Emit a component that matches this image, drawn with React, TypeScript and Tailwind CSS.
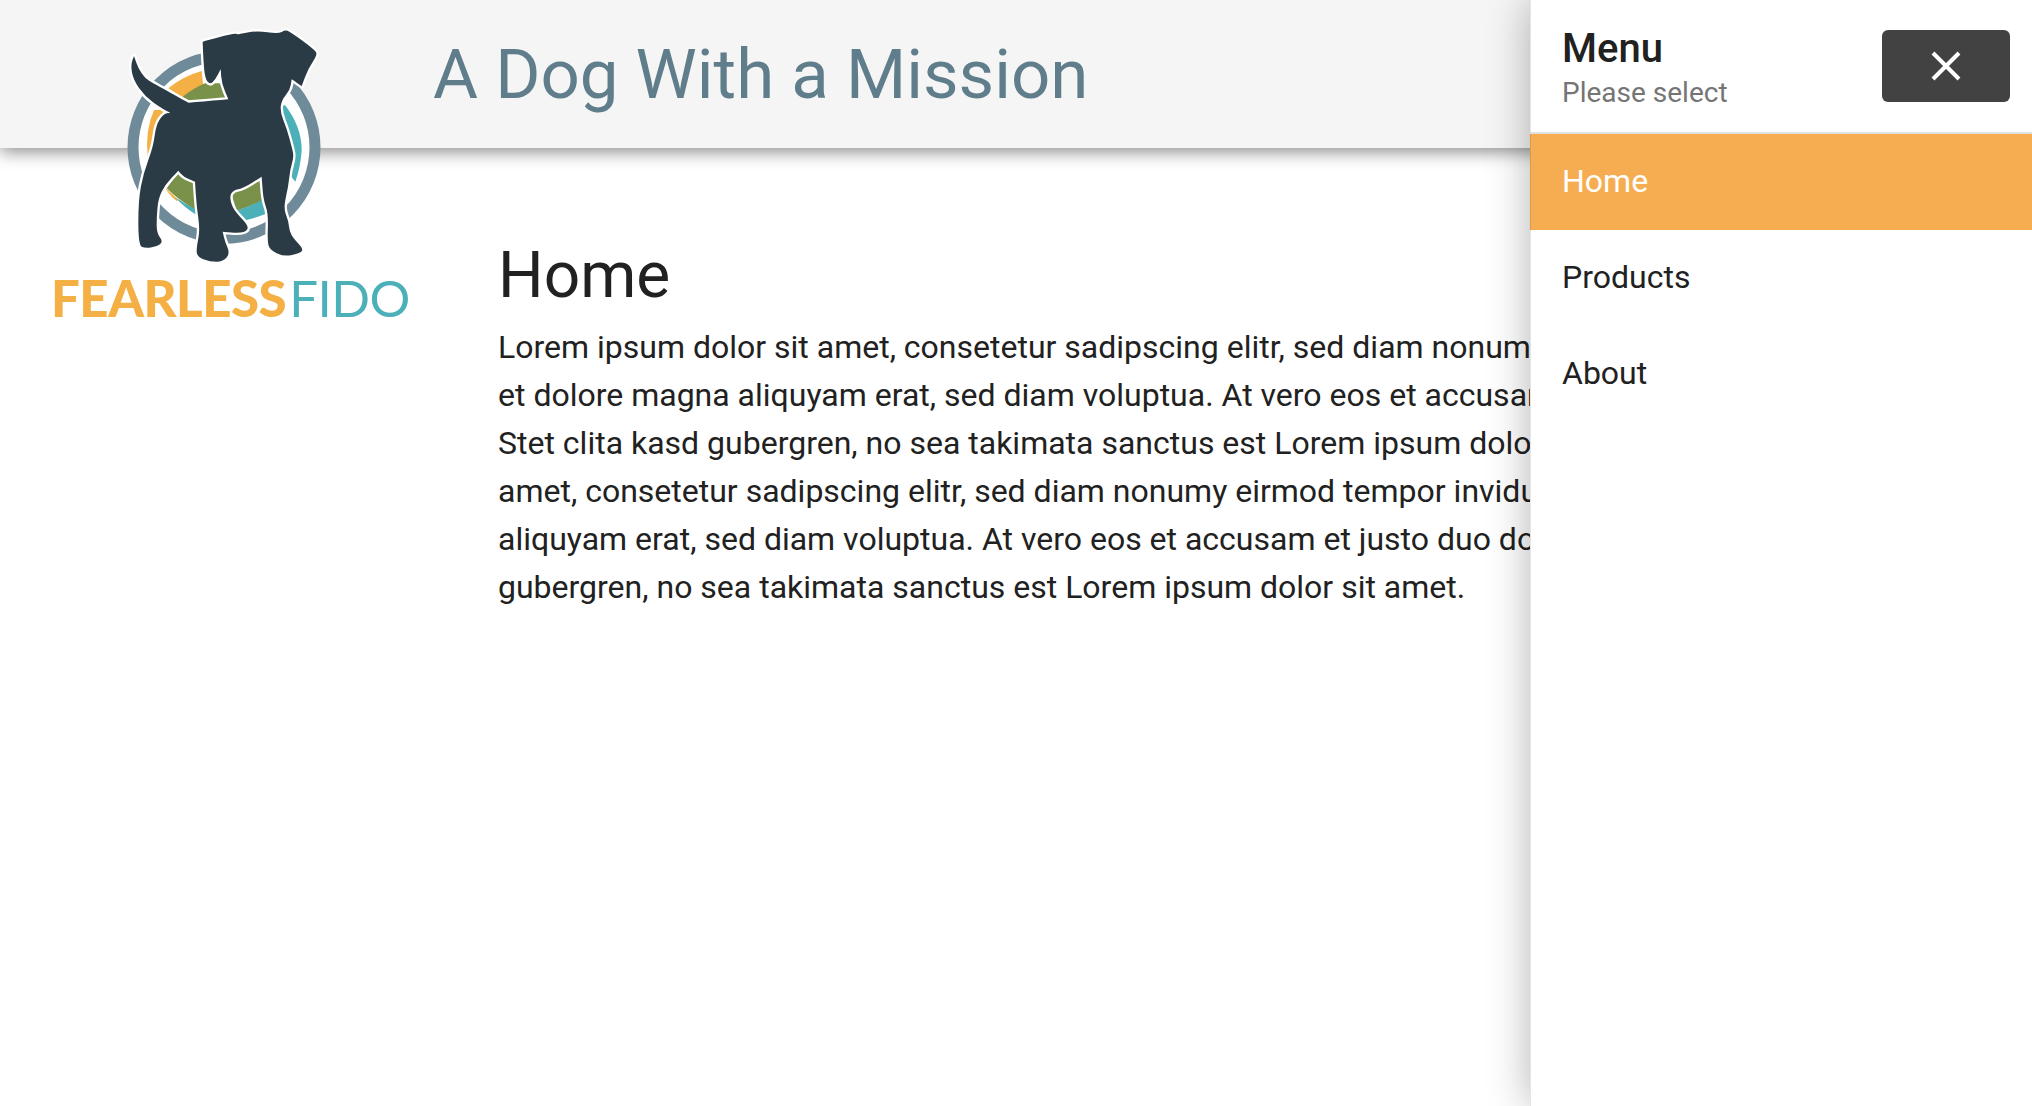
const LOREM = "Lorem ipsum dolor sit amet, consetetur sadipscing elitr, sed diam nonumy eirmod tempor invidunt ut labore et dolore magna aliquyam erat, sed diam voluptua. At vero eos et accusam et justo duo dolores et ea rebum. Stet clita kasd gubergren, no sea takimata sanctus est Lorem ipsum dolor sit amet. Lorem ipsum dolor sit amet, consetetur sadipscing elitr, sed diam nonumy eirmod tempor invidunt ut labore et dolore magna aliquyam erat, sed diam voluptua. At vero eos et accusam et justo duo dolores et ea rebum. Stet clita kasd gubergren, no sea takimata sanctus est Lorem ipsum dolor sit amet.";

type Pt = [number, number];

// outline of the dog, traced from the logo; a doubled point keeps a sharp corner
const DOG: Pt[] = [
  [312, 168], [312, 168], [325, 205], [345, 235], [370, 250], [475, 308], [475, 308], [595, 298], [595, 298],
  [575, 250], [572, 208], [572, 208], [555, 240], [540, 254], [525, 235], [520, 180], [518, 125], [518, 125],
  [610, 100], [625, 103], [625, 103], [680, 92], [745, 102], [765, 90], [780, 95], [855, 150], [862, 165],
  [835, 205], [815, 258], [815, 258], [785, 238], [785, 238], [780, 270], [755, 300], [750, 335], [770, 385],
  [785, 440], [792, 470], [780, 510], [775, 560], [760, 625], [775, 660], [780, 705], [820, 745], [812, 760],
  [760, 770], [720, 750], [712, 725], [715, 640], [700, 600], [695, 530], [695, 530], [640, 565], [610, 570],
  [598, 590], [610, 630], [650, 670], [655, 690], [630, 700], [578, 695], [578, 695], [585, 725], [600, 760],
  [580, 785], [540, 785], [500, 770], [500, 740], [510, 690], [500, 620], [495, 545], [495, 545], [460, 530],
  [445, 512], [445, 512], [405, 555], [385, 595], [380, 650], [380, 700], [400, 725], [380, 740], [345, 745],
  [325, 735], [325, 600], [340, 520], [370, 440], [378, 375], [400, 342], [420, 338], [420, 338], [395, 325],
  [345, 290], [310, 240], [302, 195],
];

const smooth = (pts: Pt[]) => {
  const mid = (a: Pt, b: Pt): Pt => [(a[0] + b[0]) / 2, (a[1] + b[1]) / 2];
  const start = mid(pts[pts.length - 1], pts[0]);
  let d = `M${start[0]} ${start[1]}`;
  pts.forEach((p, i) => {
    const m = mid(p, pts[(i + 1) % pts.length]);
    d += `Q${p[0]} ${p[1]} ${m[0]} ${m[1]}`;
  });
  return d + "Z";
};

const Logo = () => (
  <div className="absolute top-0 left-[30px] h-[340px] w-[400px]">
    <svg width="400" height="340" viewBox="0 0 1200 1020">
      <circle cx="582" cy="442" r="273" fill="white" stroke="#6f8b9a" strokeWidth="33" />
      <path fill="#f4b044" d="M415 265Q460 228 515 213L520 260L470 300Z" />
      <path fill="#7a9149" d="M458 290Q490 265 525 250L600 250L597 300L470 310Z" />
      <path fill="#f4b044" d="M372 330Q345 390 353 470L385 470L400 330Z" />
      <path fill="#4cb0b8" d="M765 315Q815 380 815 450Q812 500 796 545L760 500L750 320Z" />
      <path fill="#f4b044" d="M405 562Q420 590 440 603L445 600Z" />
      <path fill="#4cb0b8" d="M435 592Q465 625 500 645L500 628Q465 612 435 592Z" />
      <path fill="#7a9149" d="M410 565L445 515L500 540L500 630Q450 605 410 565Z" />
      <path fill="#7a9149" d="M600 570L700 540L700 600Q660 620 620 632Z" />
      <path fill="#4cb0b8" d="M620 632Q660 620 700 598L712 640Q675 655 640 662Z" />
      <path d={smooth(DOG)} fill="#2b3b45" stroke="white" strokeWidth="14" strokeLinejoin="round" paintOrder="stroke" />
    </svg>
    <div className="absolute top-[269px] left-[21px] flex font-['Lato',sans-serif] text-[51px] leading-[58px]">
      <span className="font-black tracking-[-0.5px] text-[#f4b044]">FEARLESS</span>
      <span className="ml-[3px] font-normal tracking-[-0.5px] text-[#4cb0b8]">FIDO</span>
    </div>
  </div>
);

const App = () => {
  return (
    <div className="relative h-[1106px] overflow-hidden bg-white font-['Roboto',sans-serif] text-[#212121]">
      {/* HEADER */}
      <header className="flex h-[148px] items-center bg-[#f5f5f5] pl-[433px] pt-[2px] shadow-[0_4px_16px_rgba(0,0,0,0.45)]">
        <h1 className="text-[69px] font-normal text-[#607d8b]">A Dog With a Mission</h1>
      </header>

      <Logo />

      {/* CONTENT */}
      <main className="w-[1530px] pl-[498px] pt-[103px]">
        <h2 className="text-[64px] leading-[50px] font-normal">Home</h2>
        <p className="mt-[22px] w-[1540px] text-[32px] leading-[48px]">{LOREM}</p>
      </main>

      {/* MENU */}
      <aside className="absolute top-0 right-0 h-full w-[502px] bg-white shadow-[0_0_40px_rgba(0,0,0,0.3),inset_1px_0_0_rgba(0,0,0,0.1)]">
        <div className="flex h-[134px] justify-between border-b-2 border-[#e0e0e0] pl-[32px] pr-[22px]">
          <div className="pt-[25px]">
            <div className="text-[40px] leading-[48px] font-medium">Menu</div>
            <div className="text-[28px] leading-[40px] text-[#757575]">Please select</div>
          </div>
          <button className="mt-[30px] flex h-[72px] w-[128px] items-center justify-center rounded-[6px] bg-[#424242]">
            <svg width="30" height="30" viewBox="0 0 30 30" stroke="white" strokeWidth="4"><path d="M2 2L28 28M28 2L2 28" /></svg>
          </button>
        </div>
        <div className="flex h-[96px] items-center bg-[#f6ad52] pb-[2px] pl-[32px] text-[32px] text-white shadow-[inset_1px_0_0_rgba(0,0,0,0.1)]">Home</div>
        <div className="flex h-[96px] items-center pb-[2px] pl-[32px] text-[32px]">Products</div>
        <div className="flex h-[96px] items-center pb-[2px] pl-[32px] text-[32px]">About</div>
      </aside>
    </div>
  );
};

export default App;
